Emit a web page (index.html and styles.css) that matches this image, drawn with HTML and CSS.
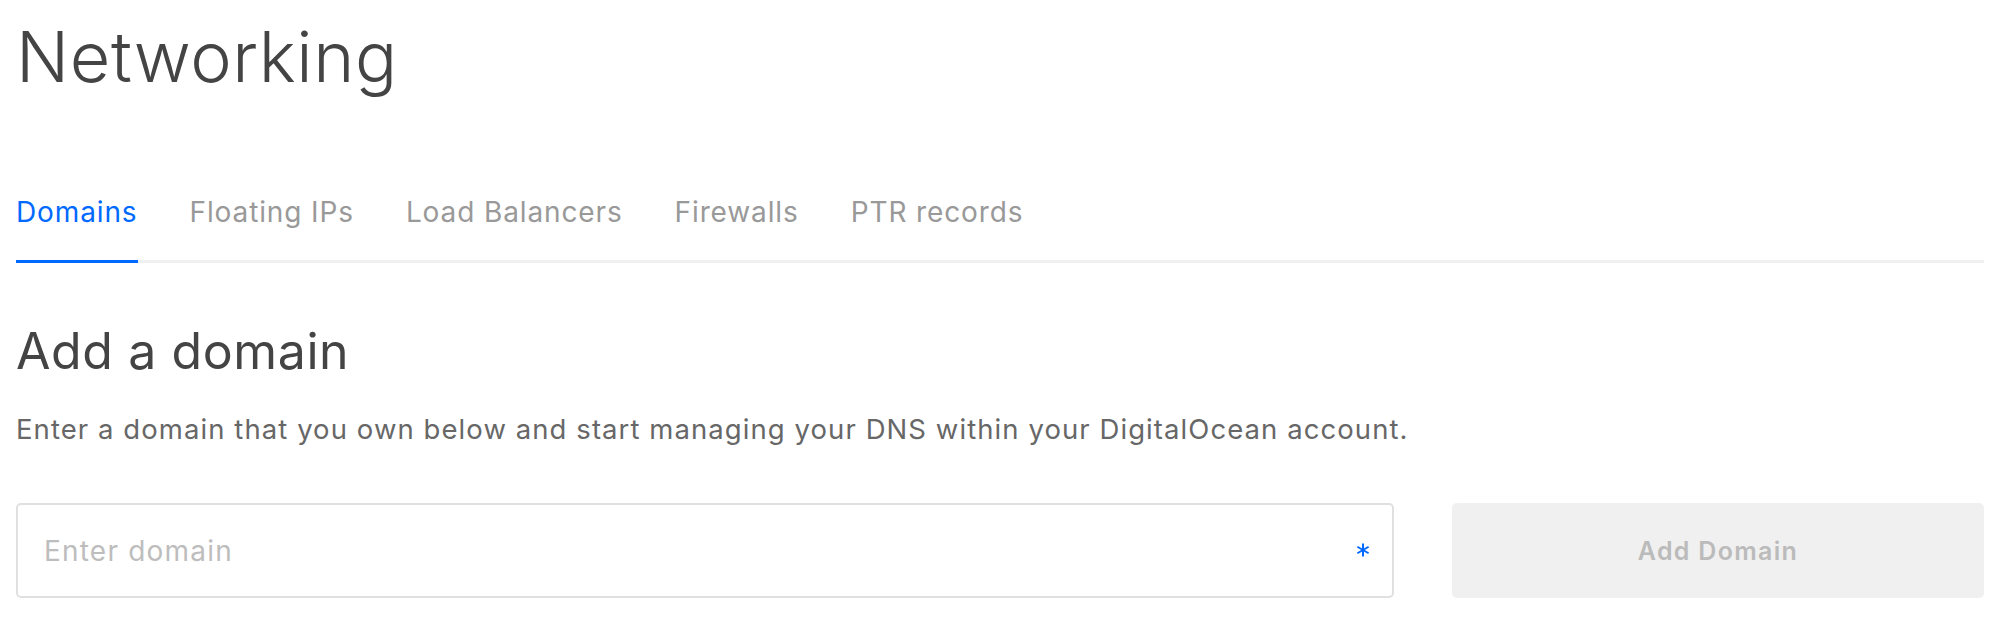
FILE: index.html
```html
<!DOCTYPE html>
<html lang="en">
<head>
<meta charset="utf-8">
<title>Networking</title>
<link rel="stylesheet" href="styles.css">
</head>
<body>
<main class="page">
  <h1 class="title">Networking</h1>
  <nav class="tabs">
    <a class="tab active" href="#">Domains</a>
    <a class="tab" href="#">Floating IPs</a>
    <a class="tab" href="#">Load Balancers</a>
    <a class="tab" href="#">Firewalls</a>
    <a class="tab" href="#">PTR records</a>
  </nav>
  <section class="add">
    <h2 class="add-title">Add a domain</h2>
    <p class="add-text">Enter a domain that you own below and start managing your DNS within your DigitalOcean account.</p>
    <form class="add-form">
      <div class="field">
        <input class="field-input" type="text" placeholder="Enter domain">
        <svg class="field-required" width="14" height="14" viewBox="0 0 14 14" aria-hidden="true">
          <g stroke="#0069ff" stroke-width="2" stroke-linecap="butt">
            <line x1="7" y1="0.5" x2="7" y2="13.5"/>
            <line x1="1.4" y1="3.75" x2="12.6" y2="10.25"/>
            <line x1="1.4" y1="10.25" x2="12.6" y2="3.75"/>
          </g>
        </svg>
      </div>
      <button class="add-button" type="button" disabled>Add Domain</button>
    </form>
  </section>
</main>
</body>
</html>
```
FILE: styles.css
```css
html, body {
  margin: 0;
  padding: 0;
  background: #ffffff;
}

body {
  font-family: "Inter", "Liberation Sans", sans-serif;
  color: #444444;
}

.page {
  padding: 0 32px 0 16px;
}

.title {
  margin: 14px 0 0;
  font-size: 70px;
  line-height: 85px;
  font-weight: 300;
  color: #444444;
  letter-spacing: 0.6px;
}

.tabs {
  display: flex;
  gap: 52px;
  margin-top: 96px;
  border-bottom: 3px solid #f0f0f0;
}

.tab {
  font-size: 28px;
  line-height: 34px;
  color: #999999;
  text-decoration: none;
  padding-bottom: 31px;
  border-bottom: 3px solid transparent;
  margin-bottom: -3px;
  letter-spacing: 0.88px;
}

.tab.active {
  color: #0069ff;
  border-bottom-color: #0069ff;
}

.add-title {
  margin: 58px 0 0;
  font-size: 50px;
  line-height: 60px;
  font-weight: 400;
  color: #444444;
  letter-spacing: 0.6px;
}

.add-text {
  margin: 32px 0 0;
  font-size: 27.5px;
  line-height: 33px;
  color: #676767;
  letter-spacing: 1.07px;
}

.add-form {
  display: flex;
  gap: 58px;
  margin-top: 57px;
}

.field {
  position: relative;
  flex: 1;
}

.field-input {
  box-sizing: border-box;
  width: 100%;
  height: 95px;
  border: 2px solid #e0e0e0;
  border-radius: 5px;
  padding: 0 60px 0 26px;
  font-family: "Inter", "Liberation Sans", sans-serif;
  font-size: 28px;
  color: #444444;
  background: #ffffff;
  outline: none;
  letter-spacing: 1.2px;
}

.field-input::placeholder {
  color: #bdbdbd;
}

.field-required {
  position: absolute;
  right: 24px;
  top: 40px;
}

.add-button {
  width: 532px;
  height: 95px;
  border: 0;
  border-radius: 5px;
  background: #f0f0f0;
  color: #bbbbbb;
  font-family: "Inter", "Liberation Sans", sans-serif;
  font-size: 25px;
  font-weight: 600;
  letter-spacing: 1.3px;
}
```
